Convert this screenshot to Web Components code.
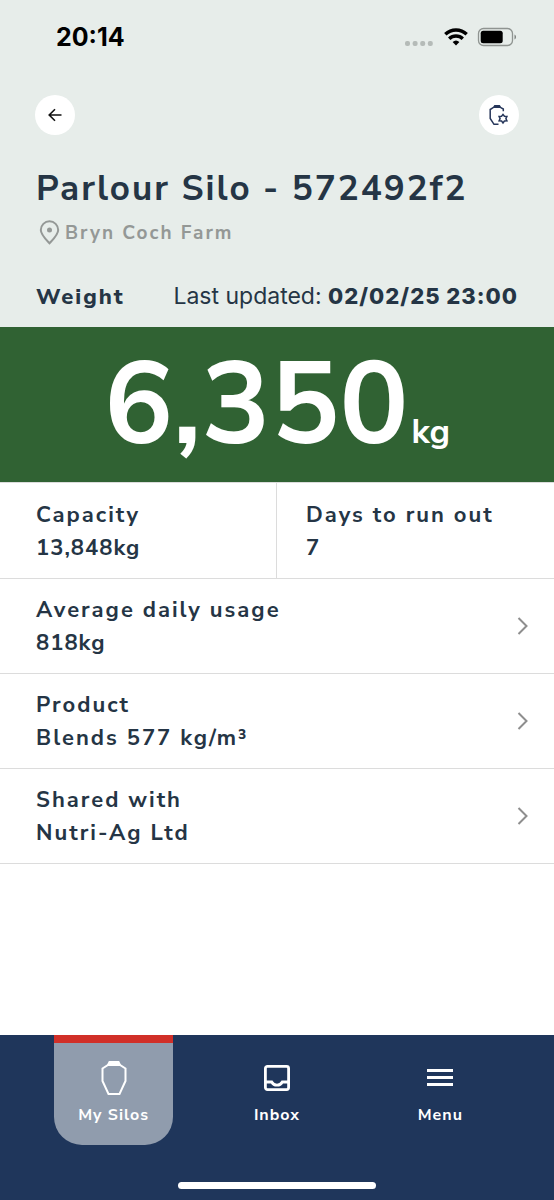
<!DOCTYPE html>
<html lang="en">
<head>
<meta charset="utf-8">
<meta name="viewport" content="width=device-width, initial-scale=1">
<title>Parlour Silo</title>
<style>
  html, body { margin: 0; height: 100%; }
  body {
    --ink: #253545;
    --mist: #e7edea;
    --green: #306233;
    --navy: #1f365b;
    --line: #dcdcdc;
    --ui: "Nunito Sans", "Nunito", "Noto Sans", sans-serif;
    --system: "Inter", sans-serif;
    font-family: var(--ui);
    font-size: 22px;
    font-weight: 700;
    letter-spacing: 2px;
    color: var(--ink);
    background: #fff;
  }
</style>
</head>
<body>
<silo-screen></silo-screen>
<script>
const define = (name, markup) => {
  const template = document.createElement('template');
  template.innerHTML = markup;
  customElements.define(name, class extends HTMLElement {
    constructor() {
      super();
      this.attachShadow({ mode: 'open' }).append(template.content.cloneNode(true));
    }
  });
};

define('status-bar', `
  <style>
    :host { display: flex; justify-content: space-between; align-items: center; height: 74px; padding: 0 37px 0 56px; color: #000; }
    time { font: 700 25px/30px var(--system); letter-spacing: 0; }
    .signals { display: flex; align-items: center; gap: 9px; }
    svg { display: block; }
  </style>
  <time>20:14</time>
  <div class="signals">
    <svg width="30" height="20" viewBox="0 0 30 20" fill="#b5bbb8" aria-hidden="true">
      <rect x="0" y="14" width="5" height="5" rx="2"/><rect x="7.600" y="14" width="5" height="5" rx="2"/><rect x="15.200" y="14" width="5" height="5" rx="2"/><rect x="22.800" y="14" width="5" height="5" rx="2"/>
    </svg>
    <svg width="24" height="18" viewBox="0 0 24 18" role="img" aria-label="Wi-Fi">
      <g fill="none" stroke="#000" stroke-width="3.400"><path d="M1.300 6.300a15.500 15.500 0 0 1 21.400 0"/><path d="M5.200 10.700a9.800 9.800 0 0 1 13.600 0"/></g>
      <path d="M8.600 14a5.100 5.100 0 0 1 6.800 0L12 17.600z"/>
    </svg>
    <svg width="40" height="20" viewBox="0 0 40 20" role="img" aria-label="Battery">
      <rect x="1.500" y="1.500" width="34" height="17" rx="5" fill="none" stroke="#8f9491" stroke-width="1.300"/>
      <rect x="3.700" y="3.700" width="22" height="12.600" rx="2.500"/>
      <path d="M37.500 7.500c2 .8 2 4.200 0 5z" fill="#7e8380"/>
    </svg>
  </div>`);

define('round-button', `
  <style>
    :host { display: block; }
    button { display: grid; place-items: center; width: 40px; height: 40px; padding: 0; border: 0; border-radius: 50%; background: #fff; cursor: pointer; }
  </style>
  <button><slot></slot></button>`);

define('silo-header', `
  <style>
    :host { display: block; background: var(--mist); }
    .actions { display: flex; justify-content: space-between; padding: 21px 35px 0; }
    .text { padding: 30px 36px 0; }
    h1 { margin: 0; font-size: 35px; font-weight: 700; line-height: 48px; }
    .place { display: flex; align-items: center; gap: 3px; margin: 4px 0 0; font-size: 19px; line-height: 32px; color: #949896; }
    .weight { display: flex; justify-content: space-between; align-items: baseline; padding: 31px 0 14px; }
    h2 { margin: 0; font-size: 22px; font-weight: 800; line-height: 32px; }
    .updated { font: 400 23px/32px var(--system); letter-spacing: 0; }
    .updated time { font-size: 22px; font-weight: 800; letter-spacing: 1px; }
    svg { display: block; }
  </style>
  <status-bar></status-bar>
  <div class="actions">
    <round-button>
      <svg width="20" height="20" viewBox="0 0 20 20" fill="none" stroke="#111" stroke-width="1.600" role="img" aria-label="Back"><path d="M16.500 10H4.500M10 4.200L4.200 10l5.800 5.800"/></svg>
    </round-button>
    <round-button>
      <svg width="24" height="24" viewBox="0 0 24 24" fill="none" stroke="#26365a" stroke-width="1.500" role="img" aria-label="Silo settings">
        <path d="M16.300 8.300V6L13 4.200H6.800L3.200 6.500v9L7 21.300h4.500M6.800 4.200l1-1.400h4.600l1 1.400"/>
        <path d="M16 11.400l1.400 1.900 2.500.1-1 2.200 1 2.300-2.500.1-1.400 1.900-1.400-1.900-2.500-.1 1-2.300-1-2.200 2.500-.1z"/>
      </svg>
    </round-button>
  </div>
  <div class="text">
    <h1>Parlour Silo - 572492f2</h1>
    <p class="place">
      <svg width="26" height="26" viewBox="0 0 26 26" fill="none" stroke="#949896" stroke-width="2" aria-hidden="true"><path d="M13.500 23.300C9 18.500 4.800 14.500 4.800 10a8.700 8.700 0 0 1 17.400 0c0 4.500-4.200 8.500-8.700 13.300z"/><circle cx="13.500" cy="10" r="2.500" fill="#949896" stroke="none"/></svg>
      <span>Bryn Coch Farm</span>
    </p>
    <div class="weight">
      <h2>Weight</h2>
      <span class="updated">Last updated: <time datetime="2025-02-02T23:00">02/02/25 23:00</time></span>
    </div>
  </div>`);

define('weight-banner', `
  <style>
    :host { display: flex; justify-content: center; align-items: baseline; gap: 3px; height: 155px; background: var(--green); color: #fff; line-height: 157px; letter-spacing: 0; }
    .value { font-size: 115px; }
    .unit { font-size: 34px; line-height: 40px; }
  </style>
  <span class="value"><slot></slot></span><span class="unit"><slot name="unit"></slot></span>`);

define('stat-pair', `
  <style>
    :host { display: grid; grid-template-columns: 1fr 1fr; border-top: 1px solid var(--line); border-bottom: 1px solid var(--line); }
    ::slotted(:first-child) { border-right: 1px solid var(--line); }
  </style>
  <slot></slot>`);

define('stat-cell', `
  <style>
    :host { display: block; padding: 16px 29px 13px; line-height: 33px; }
    :host(:first-child) { padding-left: 36px; }
    :host([figure]) .value { letter-spacing: 1px; }
  </style>
  <div><slot name="label"></slot></div>
  <div class="value"><slot></slot></div>`);

define('detail-row', `
  <style>
    :host { display: block; border-bottom: 1px solid var(--line); }
    a { display: flex; justify-content: space-between; align-items: center; padding: 15px 24px 13px 36px; line-height: 33px; color: inherit; text-decoration: none; }
    .label, .value { display: block; }
    :host([figure]) .value { letter-spacing: 1px; }
    svg { display: block; }
  </style>
  <a href="#">
    <span><span class="label"><slot name="label"></slot></span><span class="value"><slot></slot></span></span>
    <svg width="16" height="20" viewBox="0 0 16 20" fill="none" stroke="#8e8e8e" stroke-width="2" aria-hidden="true"><path d="M4.500 1l8 8-8 8"/></svg>
  </a>`);

define('tab-item', `
  <style>
    :host { display: flex; justify-content: center; }
    a { display: flex; flex-direction: column; align-items: center; box-sizing: border-box; width: 119px; height: 110px; padding-top: 16px; border-top: 8px solid transparent; border-radius: 0 0 28px 28px; font-size: 16px; line-height: 24px; letter-spacing: 1px; color: #fff; text-decoration: none; }
    :host([active]) a { background: #909cad; border-top-color: #d12f28; }
    .icon { display: grid; place-items: center; height: 38px; margin-bottom: 6px; }
  </style>
  <a href="#"><span class="icon"><slot name="icon"></slot></span><slot></slot></a>`);

define('tab-bar', `
  <style>
    :host { display: block; background: var(--navy); }
    nav { display: grid; grid-template-columns: repeat(3, 1fr); padding: 0 32px; }
    .home { width: 198px; height: 7px; margin: 37px auto 11px; border-radius: 4px; background: #fff; }
    svg { display: block; }
  </style>
  <nav>
    <tab-item active>
      <svg slot="icon" width="28" height="36" viewBox="0 0 28 36" fill="none" stroke="#fff" stroke-width="2"><path d="M8 5h12l5.500 3.500v12.500L19.500 34h-11L2.500 21V8.500z"/><path d="M8 5l1.500-3h9L20 5z" fill="#fff"/></svg>
      My Silos
    </tab-item>
    <tab-item>
      <svg slot="icon" width="28" height="28" viewBox="0 0 28 28" fill="none" stroke="#fff" stroke-width="2.800"><rect x="2.400" y="2.400" width="23.200" height="23.200" rx="2"/><path d="M2.500 18h6.200c1.200 2.200 3 3.200 5.300 3.200s4.100-1 5.300-3.200h6.200"/></svg>
      Inbox
    </tab-item>
    <tab-item>
      <svg slot="icon" width="28" height="20" viewBox="0 0 28 20" fill="#fff"><rect x="1" y="1" width="26" height="3"/><rect x="1" y="8" width="26" height="3"/><rect x="1" y="15" width="26" height="3"/></svg>
      Menu
    </tab-item>
  </nav>
  <div class="home"></div>`);

define('silo-screen', `
  <style>
    :host { display: flex; flex-direction: column; min-height: 100vh; }
    main { flex: 1; }
  </style>
  <silo-header></silo-header>
  <main>
    <weight-banner>6,350<span slot="unit">kg</span></weight-banner>
    <stat-pair>
      <stat-cell figure><span slot="label">Capacity</span>13,848kg</stat-cell>
      <stat-cell figure><span slot="label">Days to run out</span>7</stat-cell>
    </stat-pair>
    <detail-row figure><span slot="label">Average daily usage</span>818kg</detail-row>
    <detail-row><span slot="label">Product</span>Blends 577 kg/m³</detail-row>
    <detail-row><span slot="label">Shared with</span>Nutri-Ag Ltd</detail-row>
  </main>
  <tab-bar></tab-bar>`);
</script>
</body>
</html>
